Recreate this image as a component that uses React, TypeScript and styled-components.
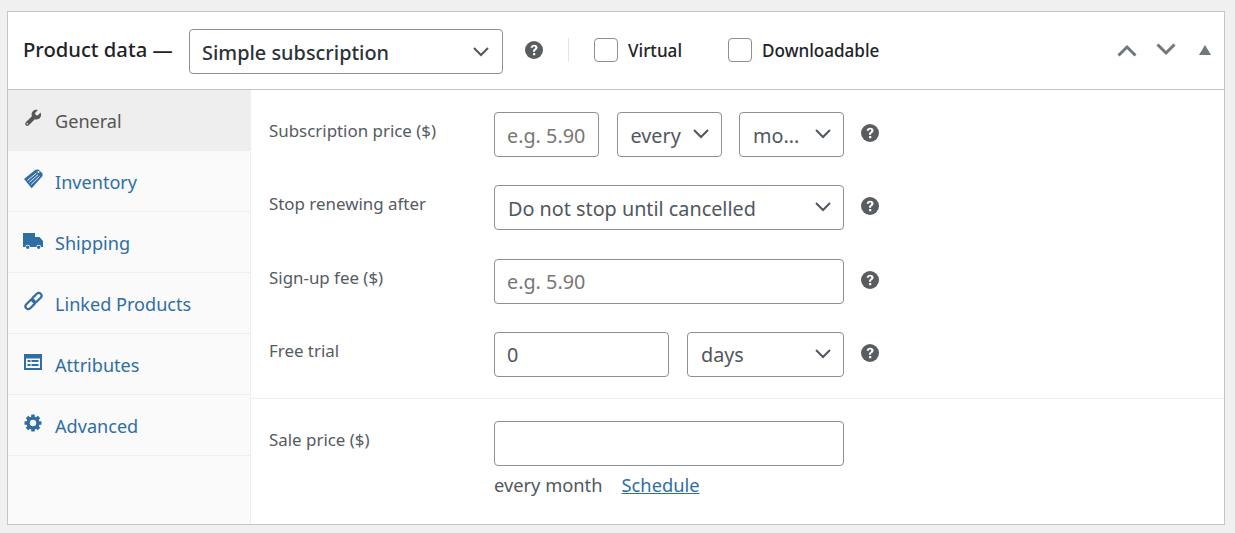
import React from 'react';
import styled, { createGlobalStyle } from 'styled-components';

const GlobalStyle = createGlobalStyle`
  html, body {
    margin: 0;
    padding: 0;
    background: #f0f0f1;
  }
  * {
    box-sizing: border-box;
  }
`;

const FONT = `'Noto Sans', 'Open Sans', sans-serif`;

const Page = styled.div`
  width: 1235px;
  height: 533px;
  padding: 11px 10px 8px 7px;
  font-family: ${FONT};
  overflow: hidden;
`;

const Panel = styled.div`
  height: 514px;
  background: #fff;
  border: 1px solid #c3c4c7;
  display: flex;
  flex-direction: column;
`;

const Header = styled.div`
  height: 78px;
  flex: none;
  display: flex;
  align-items: center;
  padding: 0 13px 0 15px;
  border-bottom: 1px solid #c3c4c7;
`;

const Title = styled.span`
  font-size: 20.2px;
  font-weight: 500;
  color: #1d2327;
  width: 166px;
  margin-top: -3px;
  white-space: nowrap;
`;

const HeaderSelect = styled.div`
  width: 314px;
  height: 45px;
  margin-top: 2px;
  display: flex;
  align-items: center;
  justify-content: space-between;
  padding: 2px 12px 0 12px;
  border: 1px solid #8c8f94;
  border-radius: 4px;
  font-size: 19.9px;
  font-weight: 500;
  color: #2c3338;
`;

const Divider = styled.div`
  width: 1px;
  height: 24px;
  background: #e6e6e8;
  margin: -2px 25px 0 25px;
`;

const CheckLabel = styled.label<{ $gap?: number }>`
  display: flex;
  align-items: center;
  gap: 10px;
  margin-right: ${(p) => p.$gap ?? 0}px;
  font-size: 17.1px;
  font-weight: 500;
  color: #1d2327;
  margin-top: -2px;
`;

const CheckText = styled.span`
  padding-top: 2px;
`;

const CheckBox = styled.span`
  width: 24px;
  height: 24px;
  border: 1px solid #8c8f94;
  border-radius: 4px;
  background: #fff;
`;

const Handles = styled.div`
  margin-left: auto;
  display: flex;
  align-items: center;
  gap: 15px;
  margin-top: -2px;
`;

const Triangle = styled.span`
  width: 0;
  height: 0;
  margin-left: 6px;
  border-left: 6px solid transparent;
  border-right: 6px solid transparent;
  border-bottom: 10px solid #72777c;
`;

const Body = styled.div`
  flex: 1;
  display: flex;
  min-height: 0;
`;

const Sidebar = styled.ul`
  width: 243px;
  flex: none;
  margin: 0;
  padding: 0;
  list-style: none;
  background: #fafafa;
  border-right: 1px solid #eee;
`;

const Tab = styled.li<{ $active?: boolean }>`
  height: 61px;
  display: flex;
  align-items: center;
  padding-left: 15px;
  gap: 12px;
  font-size: 18.1px;
  color: ${(p) => (p.$active ? '#555' : '#2f6ea5')};
  background: ${(p) => (p.$active ? '#eee' : 'transparent')};
  border-bottom: 1px solid #eee;
`;

const TabText = styled.span`
  padding-top: 2px;
`;

const TabIcon = styled.svg`
  width: 20px;
  height: 20px;
  flex: none;
  margin-top: -4px;
  fill: currentColor;
`;

const Content = styled.div`
  flex: 1;
  min-width: 0;
`;

const Group = styled.div`
  padding: 22px 18px 21px;
  display: flex;
  flex-direction: column;
  gap: 28.33px;
  border-bottom: 1px solid #eee;
`;

const LastGroup = styled(Group)`
  border-bottom: 0;
  gap: 6px;
`;

const Row = styled.div`
  display: flex;
  align-items: flex-start;
`;

const Label = styled.label`
  width: 225px;
  flex: none;
  font-size: 16.9px;
  line-height: 38px;
  color: #555b61;
  white-space: nowrap;
`;

const Fields = styled.div`
  width: 350px;
  flex: none;
  display: flex;
  justify-content: space-between;
`;

const Input = styled.div<{ $width?: number; $placeholder?: boolean }>`
  width: ${(p) => (p.$width ? `${p.$width}px` : '100%')};
  height: 45px;
  display: flex;
  align-items: center;
  padding: 1px 12px 0;
  border: 1px solid #8c8f94;
  border-radius: 4px;
  background: #fff;
  font-size: 19.8px;
  white-space: nowrap;
  color: ${(p) => (p.$placeholder ? '#777' : '#50575e')};
`;

const SelectBox = styled(Input)`
  justify-content: space-between;
  padding: 1px 11px 0 13px;
`;

const Help = styled.svg`
  width: 18px;
  height: 18px;
  flex: none;
  fill: #5a5d60;
`;

const RowHelp = styled(Help)`
  margin: 12px 0 0 17px;
`;

const HeaderHelp = styled(Help)`
  margin: -2px 0 0 22px;
`;

const SaleNote = styled.div`
  margin-left: 225px;
  font-size: 18.3px;
  color: #50575e;
  display: flex;
  gap: 19px;
`;

const Schedule = styled.a`
  color: #2f6ea5;
  text-decoration: underline;
`;

const Chevron = () => (
  <svg width="18" height="18" viewBox="0 0 18 18" fill="none" stroke="#50575e" strokeWidth="2" style={{ flex: 'none', marginTop: -2 }}>
    <path d="M2 5l7 7 7-7" />
  </svg>
);

const Handle = ({ up }: { up?: boolean }) => (
  <svg width="24" height="24" viewBox="0 0 24 24" fill="none" stroke="#72777c" strokeWidth="3">
    <path d={up ? 'M3.5 17.5L12 9l8.5 8.5' : 'M3.5 6.500L12 15l8.500-8.500'} />
  </svg>
);

const HelpIcon = () => (
  <>
    <circle cx="10" cy="10" r="10" />
    <path
      fill="#fff"
      d="M9 13.4h2.4v2.4H9zM10.2 4.2c-2.2 0-3.7 1.2-3.9 3.2h2.4c.1-.8.6-1.2 1.4-1.2.8 0 1.3.4 1.3 1.1 0 .6-.3.9-1.1 1.5-1.1.8-1.4 1.4-1.4 2.6v.6h2.3v-.4c0-.7.2-1 1-1.6 1.1-.8 1.7-1.6 1.7-2.9 0-1.8-1.5-2.9-3.7-2.9z"
    />
  </>
);

const GearTeeth = [0, 45, 90, 135, 180, 225, 270, 315];

const tabs: { label: string; icon: React.ReactNode }[] = [
  {
    label: 'General',
    icon: (
      <path
        fillRule="evenodd"
        d="M17.6 4.600L14.700 7.500 12.600 7 12 4.900 14.900 2C13.200 1.400 11.300 1.800 10 3.100 8.600 4.500 8.200 6.500 8.900 8.200L2.800 14.300C2 15.200 2 16.500 2.800 17.300 3.600 18.100 5 18.100 5.800 17.300L11.800 11.200C13.500 11.900 15.500 11.500 16.900 10.100 18.200 8.800 18.300 6.300 17.600 4.600ZM4.300 15A.8.8 0 1 1 4.300 16.600.8.8 0 0 1 4.300 15Z"
      />
    ),
  },
  {
    label: 'Inventory',
    icon: (
      <>
        <path d="M1 10L12.500.8 15.500.5 19.500 4.500V7L8.700 19.300Z" />
        <path
          stroke="#fafafa"
          strokeWidth=".9"
          fill="none"
          d="M4.400 11.500L13.500 4M6.200 13.500L15 5.700M8.100 15.500L16.500 7.400"
        />
        <circle cx="15.500" cy="3" r=".9" fill="#fafafa" />
      </>
    ),
  },
  {
    label: 'Shipping',
    icon: (
      <path
        fillRule="evenodd"
        d="M0 3H12V7H16.500L20 11V17H18A2.300 2.300 0 0 0 13.400 17H7A2.300 2.300 0 0 0 2.400 17H0ZM4.700 15.500A1.700 1.700 0 1 1 4.700 18.900 1.700 1.700 0 0 1 4.700 15.500ZM15.700 15.500A1.700 1.700 0 1 1 15.700 18.900 1.700 1.700 0 0 1 15.700 15.500Z"
      />
    ),
  },
  {
    label: 'Linked Products',
    icon: (
      <g fill="none" stroke="currentColor" strokeWidth="2.200">
        <rect x="1.700" y="10.500" width="11" height="5.600" rx="2.800" transform="rotate(-45 7.200 13.300)" />
        <rect x="8.300" y="3.900" width="11" height="5.600" rx="2.800" transform="rotate(-45 13.800 6.700)" />
      </g>
    ),
  },
  {
    label: 'Attributes',
    icon: (
      <path
        fillRule="evenodd"
        d="M1 2H19V18H1ZM3 6.500V16H17V6.500ZM4.500 8H7.500V10H4.500ZM8.500 8H15.500V10H8.500ZM4.500 12H7.500V14H4.500ZM8.500 12H15.500V14H8.500Z"
      />
    ),
  },
  {
    label: 'Advanced',
    icon: (
      <g>
        <circle cx="10" cy="10" r="4.900" fill="none" stroke="currentColor" strokeWidth="3.400" />
        {GearTeeth.map((deg) => (
          <rect key={deg} x="8.200" y="1.500" width="3.600" height="3.400" rx=".4" transform={`rotate(${deg} 10 10)`} />
        ))}
      </g>
    ),
  },
];

export default function App() {
  return (
    <Page>
      <GlobalStyle />
      <Panel>
        <Header>
          <Title>Product data —</Title>
          <HeaderSelect>
            <span>Simple subscription</span>
            <Chevron />
          </HeaderSelect>
          <HeaderHelp viewBox="0 0 20 20">
            <HelpIcon />
          </HeaderHelp>
          <Divider />
          <CheckLabel $gap={46}>
            <CheckBox />
            <CheckText>Virtual</CheckText>
          </CheckLabel>
          <CheckLabel>
            <CheckBox />
            <CheckText>Downloadable</CheckText>
          </CheckLabel>
          <Handles>
            <Handle up />
            <Handle />
            <Triangle />
          </Handles>
        </Header>
        <Body>
          <Sidebar>
            {tabs.map((tab, i) => (
              <Tab key={tab.label} $active={i === 0}>
                <TabIcon viewBox="0 0 20 20">{tab.icon}</TabIcon>
                <TabText>{tab.label}</TabText>
              </Tab>
            ))}
          </Sidebar>
          <Content>
            <Group>
              <Row>
                <Label>Subscription price ($)</Label>
                <Fields>
                  <Input $width={105} $placeholder>e.g. 5.90</Input>
                  <SelectBox $width={105}>
                    <span>every</span>
                    <Chevron />
                  </SelectBox>
                  <SelectBox $width={105}>
                    <span>mo...</span>
                    <Chevron />
                  </SelectBox>
                </Fields>
                <RowHelp viewBox="0 0 20 20">
                  <HelpIcon />
                </RowHelp>
              </Row>
              <Row>
                <Label>Stop renewing after</Label>
                <Fields>
                  <SelectBox>
                    <span>Do not stop until cancelled</span>
                    <Chevron />
                  </SelectBox>
                </Fields>
                <RowHelp viewBox="0 0 20 20">
                  <HelpIcon />
                </RowHelp>
              </Row>
              <Row>
                <Label>Sign-up fee ($)</Label>
                <Fields>
                  <Input $placeholder>e.g. 5.90</Input>
                </Fields>
                <RowHelp viewBox="0 0 20 20">
                  <HelpIcon />
                </RowHelp>
              </Row>
              <Row>
                <Label>Free trial</Label>
                <Fields>
                  <Input $width={175}>0</Input>
                  <SelectBox $width={157}>
                    <span>days</span>
                    <Chevron />
                  </SelectBox>
                </Fields>
                <RowHelp viewBox="0 0 20 20">
                  <HelpIcon />
                </RowHelp>
              </Row>
            </Group>
            <LastGroup>
              <Row>
                <Label>Sale price ($)</Label>
                <Fields>
                  <Input />
                </Fields>
              </Row>
              <SaleNote>
                <span>every month</span>
                <Schedule>Schedule</Schedule>
              </SaleNote>
            </LastGroup>
          </Content>
        </Body>
      </Panel>
    </Page>
  );
}
